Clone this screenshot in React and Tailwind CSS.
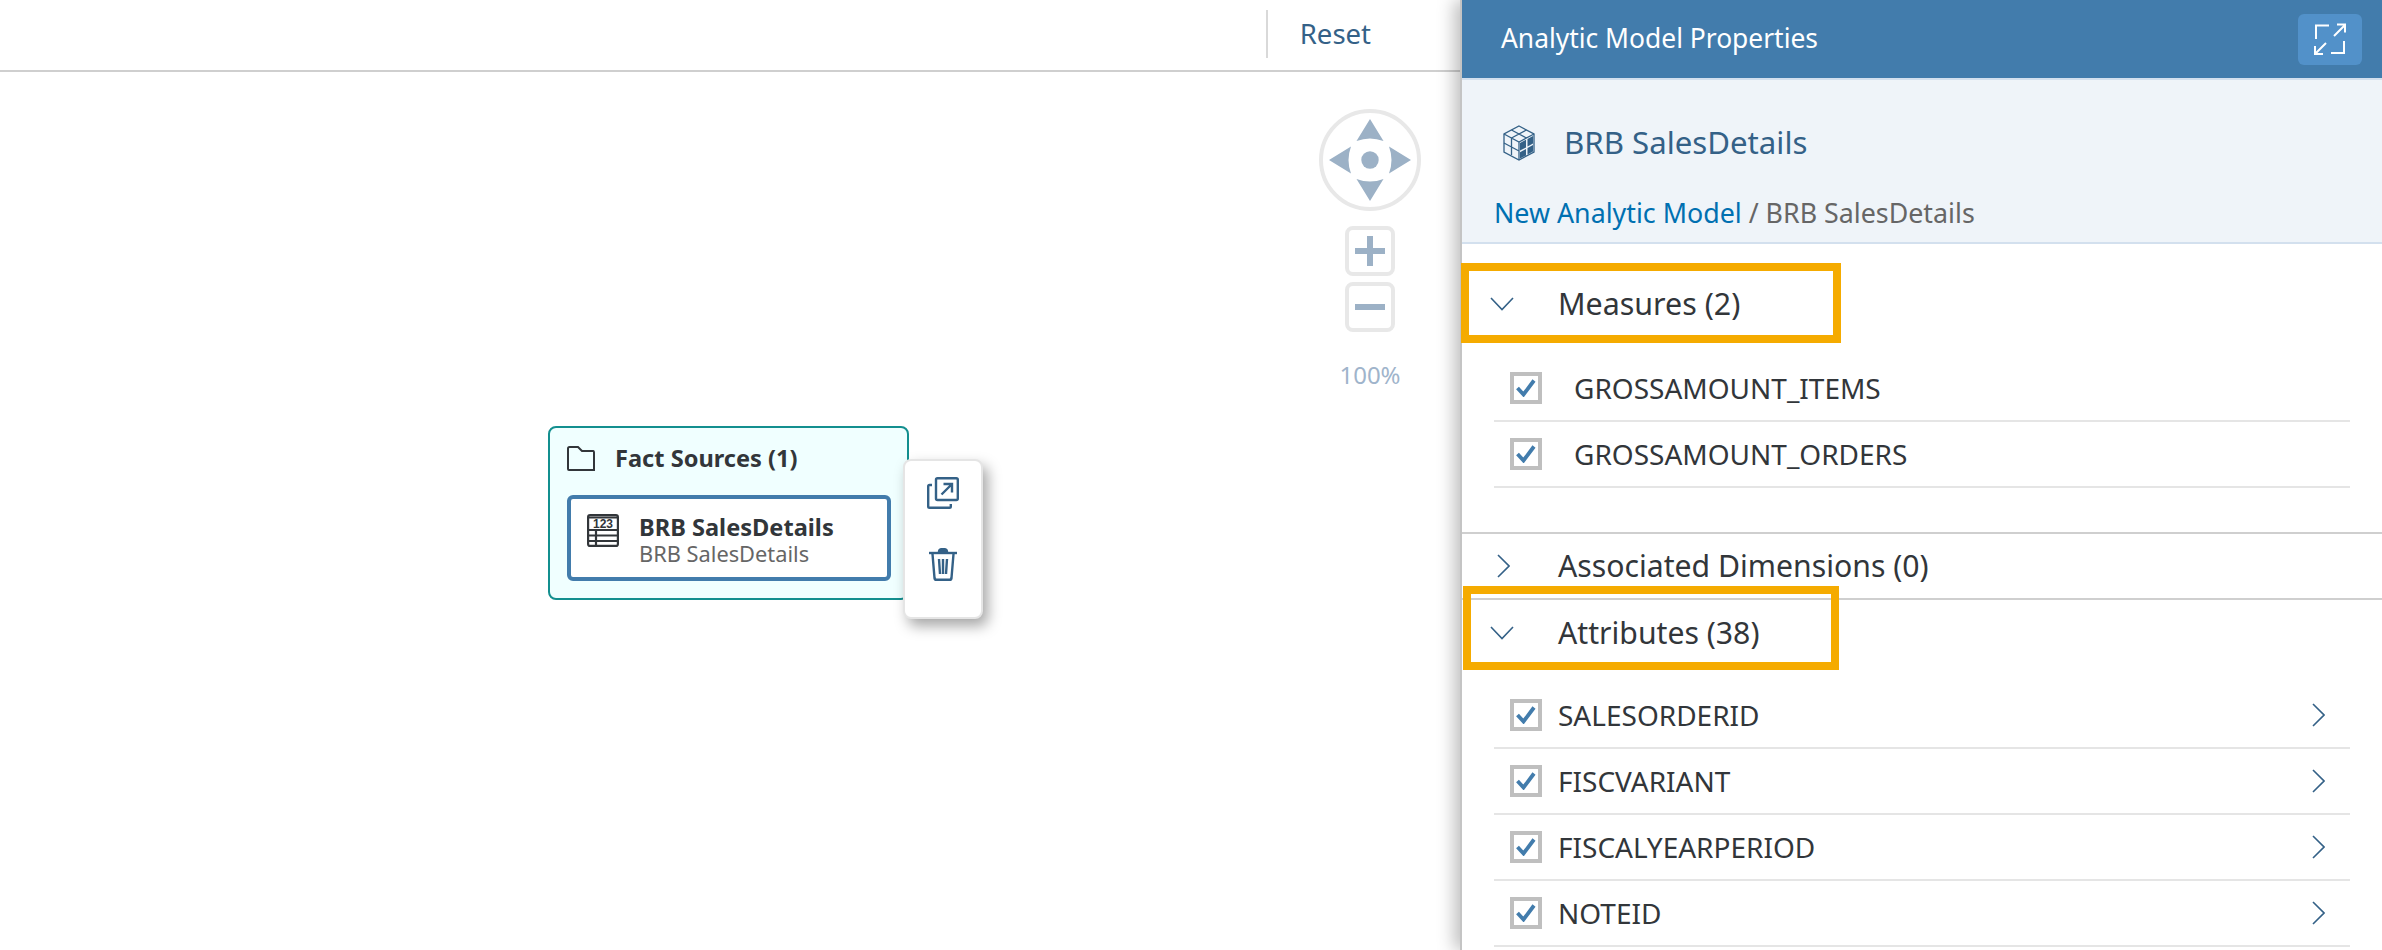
const measures = ['GROSSAMOUNT_ITEMS', 'GROSSAMOUNT_ORDERS'];
const attributes = ['SALESORDERID', 'FISCVARIANT', 'FISCALYEARPERIOD', 'NOTEID'];

const ChevronDown = () => (
  <svg width="24" height="14" viewBox="0 0 24 14" fill="none" stroke="#346187" strokeWidth="1.6">
    <path d="M1 1l11 11.5L23 1" />
  </svg>
);

const ChevronRight = () => (
  <svg width="13" height="24" viewBox="0 0 13 24" fill="none" stroke="#346187" strokeWidth="1.6">
    <path d="M1 1l11 11L1 23" />
  </svg>
);

const Checkbox = () => (
  <span className="flex h-8 w-8 shrink-0 items-center justify-center border-4 border-[#bfbfbf] bg-white">
    <svg width="20" height="18" viewBox="0 0 20 18" fill="none" stroke="#427cac" strokeWidth="3.8">
      <path d="M1.5 9l6 6.5L18 1.5" />
    </svg>
  </span>
);

const Row = ({ label, indent, arrow }) => (
  <div className="flex h-[66px] items-center border-b-2 border-[#e5e5e5] pl-4">
    <Checkbox />
    <span className={`${indent} text-[28px] text-[#32363a]`}>{label}</span>
    {arrow && (
      <span className="ml-auto mr-[25px] flex">
        <ChevronRight />
      </span>
    )}
  </div>
);

const CubeIcon = () => (
  <svg width="32" height="36" viewBox="0 0 32 36" fill="none" stroke="#346187" strokeWidth="1.3">
    <path d="M16 1L31 9v18l-15 8L1 27V9z" />
    <path d="M1 9l15 8 15-8M16 17v18M1 18l15 8M8.5 5l15 8M23.5 5L8.5 13M8.5 13v17" />
    <path d="M17 18l6-3.2v7.6l-6 3.2zM24.5 14l5.5-3v7.6l-5.5 3zM17 27.2l6-3.2v6.4l-6 3.2zM24.5 23l5.5-3v6.4l-5.5 3z" fill="#346187" stroke="none" />
  </svg>
);

const TableIcon = () => (
  <svg width="32" height="33" viewBox="0 0 32 33" fill="none" stroke="#32363a" strokeWidth="2.2">
    <rect x="1.1" y="1.1" width="29.8" height="30.8" rx="2" />
    <path d="M1 16h30M1 21.5h30M1 27h30M9 16v16" />
    <path d="M1 3.5h30" strokeWidth="2" />
    <text x="16" y="14" textAnchor="middle" fontSize="12" fontWeight="700" fill="#32363a" stroke="none" fontFamily="Liberation Sans, sans-serif">123</text>
  </svg>
);

const Joystick = () => (
  <svg width="102" height="102" viewBox="0 0 102 102">
    <circle cx="51" cy="51" r="49" fill="#fff" stroke="#e8e8e8" strokeWidth="4" />
    <g fill="#9cb1c6">
      <path d="M51 10l13.5 22q-13.5-5-27 0z" />
      <path d="M51 92l13.5-22q-13.5 5-27 0z" />
      <path d="M10 51l22-13.5q-5 13.5 0 27z" />
      <path d="M92 51l-22-13.5q5 13.5 0 27z" />
      <circle cx="51" cy="51" r="8.7" />
    </g>
  </svg>
);

const ZoomButton = ({ plus }) => (
  <div className="flex h-[50px] w-[50px] items-center justify-center rounded-lg border-4 border-[#e8e8e8] bg-white">
    <svg width="30" height="30" viewBox="0 0 30 30" fill="#9cb1c6">
      <rect x="0" y="12" width="30" height="6" />
      {plus && <rect x="12" y="0" width="6" height="30" />}
    </svg>
  </div>
);

const App = () => {
  return (
    <div className="flex h-[950px] w-full overflow-hidden bg-white font-['Noto_Sans',sans-serif]">
      <div className="relative flex min-w-0 flex-1 flex-col">
        <div className="flex h-[72px] shrink-0 items-start justify-end border-b-2 border-[#cfcfcf] pr-[89px] pt-[10px]">
          <div className="flex h-12 items-center border-l-2 border-[#d9d9d9] pl-8">
            <span className="text-[27.5px] leading-none text-[#346187]">Reset</span>
          </div>
        </div>

        <div className="relative flex-1">
          {/* zoom controls float over the canvas */}
          <div className="absolute left-[1319px] top-[37px] flex w-[102px] flex-col items-center">
            <Joystick />
            <div className="mt-[15px] flex flex-col gap-[6px]">
              <ZoomButton plus />
              <ZoomButton />
            </div>
            <span className="mt-[31px] text-[24px] leading-none text-[#9fb4cb]">100%</span>
          </div>

          {/* node on the canvas */}
          <div className="absolute left-[548px] top-[354px] h-[174px] w-[361px] rounded-lg border-2 border-[#138f8f] bg-[#f0ffff] px-[17px] pt-[18px]">
            <div className="flex items-center">
              <svg width="28" height="25" viewBox="0 0 28 25" fill="none" stroke="#32363a" strokeWidth="2">
                <path d="M1 23V2.5Q1 1 2.5 1H11l4 4h11.5Q27 5 27 6.5V24H2Q1 24 1 23z" />
              </svg>
              <span className="ml-[20px] text-[23.6px] font-bold leading-none text-[#32363a]">Fact Sources (1)</span>
            </div>
            <div className="mt-6 flex h-[86px] w-[324px] rounded-md border-4 border-[#427cac] bg-white pl-4 pt-[15px]">
              <TableIcon />
              <div className="ml-5 flex flex-col">
                <span className="text-[23.6px] font-bold leading-[27px] text-[#32363a]">BRB SalesDetails</span>
                <span className="text-[21.8px] leading-[25px] text-[#666666]">BRB SalesDetails</span>
              </div>
            </div>
          </div>

          {/* node action popover */}
          <div className="absolute left-[903px] top-[387px] flex h-[160px] w-[80px] flex-col items-center gap-[39px] rounded-lg border-2 border-[#e5e5e5] bg-white pt-4 shadow-[5px_7px_14px_rgba(0,0,0,0.35)]">
            <svg width="32" height="32" viewBox="0 0 32 32" fill="none" stroke="#346187" strokeWidth="2.4">
              <rect x="9" y="1.2" width="21.8" height="21.8" rx="1.5" />
              <path d="M5 8H2.5Q1.2 8 1.2 9.5v20q0 1.3 1.3 1.3h20q1.3 0 1.3-1.3V27" />
              <path d="M14.5 17.5l10-10M16.5 7h8.5v8.5" />
            </svg>
            <svg width="28" height="33" viewBox="0 0 28 33" fill="none" stroke="#346187" strokeWidth="2.4">
              <path d="M0 5h28" />
              <path d="M10 4q0-3 4-3t4 3z" fill="#346187" />
              <path d="M3.5 6l2 24q.2 1.8 2 1.8h13q1.8 0 2-1.8l2-24" />
              <path d="M10 11l1 15M14 11v15M18 11l-1 15" />
            </svg>
          </div>
        </div>
      </div>

      <aside className="z-10 flex w-[922px] shrink-0 flex-col border-l-2 border-[#c4c4c4] shadow-[-6px_0_16px_rgba(0,0,0,0.25)]">
        <header className="flex h-[78px] shrink-0 items-center justify-between bg-[#427cac] pl-[39px] pr-[20px]">
          <h1 className="text-[26.4px] font-normal text-white">Analytic Model Properties</h1>
          <button className="flex h-[51px] w-16 items-center justify-center rounded-md bg-[#5291c9]">
            <svg width="32" height="32" viewBox="0 0 32 32" fill="none" stroke="#fff" strokeWidth="2">
              <path d="M2 16V2.5h13M31 2L20 13M23 1.5h8v8M30 18v12H17M1 31l11-11M9 31H1v-8" />
            </svg>
          </button>
        </header>

        <div className="h-[166px] shrink-0 border-y-2 border-[#d3e0ee] bg-[#eff4f9] px-[32px]">
          <div className="flex items-center pl-[9px] pt-[45px]">
            <CubeIcon />
            <span className="ml-[29px] text-[31.2px] leading-none text-[#346187]">BRB SalesDetails</span>
          </div>
          <div className="mt-[39px] text-[26.8px] leading-none text-[#666666]">
            <a className="text-[#0070b1]">New Analytic Model</a> / BRB SalesDetails
          </div>
        </div>

        <section className="h-[290px] shrink-0 border-b-2 border-[#cfcfcf]">
          <div className="relative flex h-[112px] items-center pl-7 pt-2">
            <ChevronDown />
            <span className="ml-[44px] text-[30.4px] leading-none text-[#32363a]">Measures (2)</span>
            <div className="absolute left-[-1px] top-[19px] h-20 w-[380px] border-8 border-[#f5ab00]" />
          </div>
          <div className="ml-[32px] mr-[32px]">
            {measures.map((item) => (
              <Row key={item} label={item} indent="ml-8" />
            ))}
          </div>
        </section>

        <section className="flex h-[66px] shrink-0 items-center border-b-2 border-[#cfcfcf] pl-[35px]">
          <ChevronRight />
          <span className="ml-[48px] text-[30.2px] leading-none text-[#32363a]">Associated Dimensions (0)</span>
        </section>

        <section className="flex-1">
          <div className="relative flex h-[83px] items-center pb-[17px] pl-7">
            <ChevronDown />
            <span className="ml-[44px] text-[30.2px] leading-none text-[#32363a]">Attributes (38)</span>
            <div className="absolute left-[1px] top-[-14px] h-[84px] w-[376px] border-8 border-[#f5ab00]" />
          </div>
          <div className="ml-[32px] mr-[32px]">
            {attributes.map((item) => (
              <Row key={item} label={item} indent="ml-4" arrow />
            ))}
          </div>
        </section>
      </aside>
    </div>
  );
};

export default App;
